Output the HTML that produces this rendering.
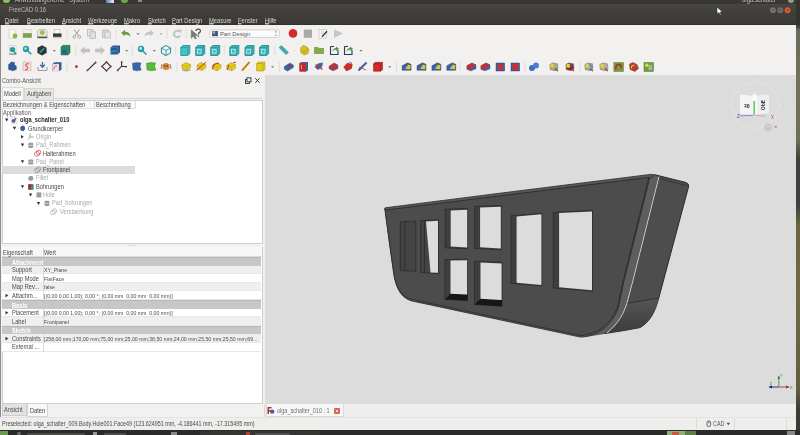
<!DOCTYPE html>
<html><head><meta charset="utf-8">
<style>
*{margin:0;padding:0;box-sizing:border-box}
html,body{width:800px;height:435px;overflow:hidden;background:#3a3935;font-family:"Liberation Sans",sans-serif}
.t,.menu{will-change:transform;transform:scaleY(1.18);transform-origin:0 55%}
.menu u{text-decoration-thickness:0.6px;text-underline-offset:0.1px}
.a{position:absolute}
#top{left:0;top:0;width:800px;height:4px;background:#383733}
#title{left:0;top:4px;width:796px;height:21px;background:linear-gradient(#4a4945 0,#46453f 1px,#403f3b 8px,#3b3a36 19px,#2f2e2b 21px)}
.menu{position:absolute;top:18px;font-size:5.8px;line-height:7px;color:#dcd8cf;white-space:nowrap}
#tb{left:0;top:25px;width:796px;height:50px;background:#f2f1f0}
#left{left:0;top:75px;width:265px;height:355px;background:#f2f1f0}
#view{left:265px;top:75px;width:531px;height:329px;background:#dcdcdc}
#wall{left:795.5px;top:0;width:4.5px;height:435px;background:linear-gradient(#33322e 0,#33322e 25px,#676b5c 30px,#737258 80px,#6f6e55 140px,#3e403c 160px,#3e403c 205px,#6a6540 225px,#6f6a45 300px,#625e3e 390px,#3a3a36 410px,#3a3a36 435px)}
#tabbar{left:264px;top:404px;width:532px;height:13px;background:#efeeec}
#status{left:0;top:417px;width:796px;height:13px;background:#efeeec}
#task{left:0;top:430px;width:800px;height:5px;background:#2b2b2b}
.t{position:absolute;font-size:5.7px;color:#333;white-space:nowrap;line-height:8px}
.grp{left:2px;width:259px;height:8.6px;background:#c8c7c5;border-top:0.6px solid #b9b8b6}
.row{left:2px;width:259px;height:8.6px;background:#fff;border-bottom:0.5px solid #e8e8e8}
.row.alt{background:#efefef}
.gt{left:11.5px;color:#fff;font-weight:bold}
.pl{left:11.5px;color:#4a4a4a}
.pv{left:44px;color:#4a4a4a;font-size:5.2px}
</style></head><body>
<div id="top" class="a"></div>
<div id="title" class="a"></div>
<div class="a t" style="left:9px;top:5.5px;color:#bdb9b0;font-size:5.8px">FreeCAD 0.16</div>
<div class="menu" style="left:5px"><u>D</u>atei</div>
<div class="menu" style="left:27px"><u>B</u>earbeiten</div>
<div class="menu" style="left:62px"><u>A</u>nsicht</div>
<div class="menu" style="left:88px"><u>W</u>erkzeuge</div>
<div class="menu" style="left:124px"><u>M</u>akro</div>
<div class="menu" style="left:148px"><u>S</u>ketch</div>
<div class="menu" style="left:172px"><u>P</u>art Design</div>
<div class="menu" style="left:209px"><u>M</u>easure</div>
<div class="menu" style="left:238px"><u>F</u>enster</div>
<div class="menu" style="left:265px"><u>H</u>ilfe</div>
<div id="tb" class="a"></div>
<svg id="tbsvg" class="a" style="left:0;top:0" width="800" height="80" viewBox="0 0 800 80">
<path d="M9,29.3 H13.5 L15.6,31.4 V38.2 H9 Z" fill="#f6f6f6" stroke="#c8c8c8" stroke-width="0.6"/>
<circle cx="15" cy="36" r="2.4" fill="#8ab83a"/>
<rect x="22.9" y="29.8" width="8.9" height="3.4" fill="#f0f0ee" stroke="#c9c9c9" stroke-width="0.5"/>
<rect x="22.9" y="33.2" width="8.9" height="4.6" fill="#7ea04a"/>
<path d="M37.5,31 L39,29.5 H45.8 L47.2,31 V38 H37.5 Z" fill="#e4e4e2" stroke="#9a9a9a" stroke-width="0.5"/>
<rect x="37.5" y="36.6" width="9.7" height="1.5" fill="#555"/>
<circle cx="42.3" cy="32.6" r="2.4" fill="#9cc040"/>
<rect x="54.5" y="29.8" width="5.5" height="4" fill="#fafafa" stroke="#aaa" stroke-width="0.5"/>
<rect x="53" y="33.5" width="8.5" height="3.5" fill="#3a3a3a"/>
<rect x="53" y="36.8" width="8.5" height="1.4" fill="#c8c8c8"/>
<path d="M67,28.700000000000003 V38.7" stroke="#dcdbd9" stroke-width="0.9"/>
<path d="M74,29.5 L78.5,35.5 M79.5,29.5 L75,35.5" stroke="#a8a8a8" stroke-width="1.1"/>
<circle cx="74.3" cy="36.8" r="1.4" fill="none" stroke="#a0a0a0" stroke-width="0.9"/><circle cx="79.3" cy="36.8" r="1.4" fill="none" stroke="#a0a0a0" stroke-width="0.9"/>
<rect x="87.5" y="29.5" width="5.5" height="6.5" fill="#e8e8e8" stroke="#b0b0b0" stroke-width="0.7"/>
<rect x="90" y="31.8" width="5.5" height="6.5" fill="#e0e0e0" stroke="#b0b0b0" stroke-width="0.7"/>
<rect x="102.5" y="30" width="6" height="7.5" fill="#d8d8d8" stroke="#b8b8b8" stroke-width="0.7"/>
<rect x="105" y="32" width="5.5" height="6" fill="#e6e6e6" stroke="#b8b8b8" stroke-width="0.7"/>
<path d="M116.2,28.700000000000003 V38.7" stroke="#dcdbd9" stroke-width="0.9"/>
<path d="M121,33 L125,29.8 V31.8 Q130,31.8 130.5,36.5 Q128,34.2 125,34.4 V36.2 Z" fill="#6c9a3c"/>
<path d="M136.4,33.2 H139.6 L138,35 Z" fill="#777"/>
<path d="M154,33 L150,29.8 V31.8 Q145,31.8 144.5,36.5 Q147,34.2 150,34.4 V36.2 Z" fill="#c4c4c4"/>
<path d="M159.4,33.2 H162.6 L161,35 Z" fill="#aaa"/>
<path d="M167.2,28.700000000000003 V38.7" stroke="#dcdbd9" stroke-width="0.9"/>
<path d="M179.6,31.6 A3.3,3.3 0 1 0 180.2,35.6" fill="none" stroke="#c4c4c4" stroke-width="2.1"/>
<path d="M177.6,29.8 L181.8,29.6 L181,33.6 Z" fill="#c4c4c4"/>
<path d="M186.4,28.700000000000003 V38.7" stroke="#dcdbd9" stroke-width="0.9"/>
<path d="M191.2,29.8 L191.2,38.3 L193.4,36.3 L195.1,39 L196.5,38.2 L195,35.6 L197.9,35.5 Z" fill="#7c7c7c" stroke="#5a5a5a" stroke-width="0.4"/>
<path d="M195.8,31 Q196.2,29 198.4,29 Q200.6,29.2 200.4,31.2 Q200.2,32.6 198.6,33.2 V34.4" fill="none" stroke="#4a4a4a" stroke-width="1.2"/><circle cx="198.6" cy="36.3" r="0.7" fill="#4a4a4a"/>
<rect x="209.8" y="29.9" width="69.5" height="7.5" rx="1.5" fill="#fbfbfb" stroke="#c4c3c1" stroke-width="0.7"/>
<rect x="212" y="31" width="6" height="5.2" fill="#3a5a9a"/><rect x="212.5" y="31.3" width="2.6" height="2.4" fill="#c0b040"/>
<text x="220" y="35.8" font-family="Liberation Sans" font-size="5.8" fill="#555">Part Design</text>
<path d="M274.8,32.3 H277 L275.9,31 Z M274.8,34.8 H277 L275.9,36.1 Z" fill="#666"/>
<circle cx="293" cy="33.4" r="4.3" fill="#d42a2a"/>
<rect x="303.8" y="29.6" width="8.2" height="8.2" fill="#a9a9a9"/>
<rect x="319" y="29.4" width="7.6" height="8.8" fill="#f4f4f4" stroke="#b8b8b8" stroke-width="0.5"/>
<path d="M321,32 H324 M321,33.5 H323" stroke="#aaa" stroke-width="0.5"/><path d="M322,36.8 L327,31.3" stroke="#333" stroke-width="1.3"/>
<path d="M334,29.3 L343,33.6 L334,38 Z" fill="#c6c6c6"/>
<rect x="9.2" y="45.8" width="6.8" height="9" fill="#f3f3f3" stroke="#bbb" stroke-width="0.5"/>
<circle cx="12.5" cy="49.5" r="2.6" fill="#1e9ea0"/><path d="M13.5,51 L16,54" stroke="#1e9ea0" stroke-width="1.5"/>
<path d="M9.5,54 H15.5" stroke="#555" stroke-width="0.8"/>
<circle cx="26" cy="49" r="3.2" fill="#28a0a6"/><circle cx="25.6" cy="48.4" r="1.2" fill="#b8eef0"/><path d="M27.8,51 L31.2,54.2" stroke="#28a0a6" stroke-width="1.7"/>
<path d="M42,45.3 L46.6,47.8 V53 L42,55.5 L37.4,53 V47.8 Z" fill="#2c3838"/><path d="M39.8,52.5 L44.2,48.2" stroke="#30b0b8" stroke-width="1.2"/>
<path d="M52.699999999999996,50.0 H55.9 L54.3,51.8 Z" fill="#777"/>
<path d="M61,47 L63,45.3 H70 V53 L68,55 H61 Z" fill="#2a8a5a" stroke="#1a6a4a" stroke-width="0.5"/>
<circle cx="64.5" cy="52" r="2.3" fill="#2a5aa0"/>
<path d="M75.6,45.5 V55.5" stroke="#dcdbd9" stroke-width="0.9"/>
<path d="M80,50.5 L84.5,46.5 V48.8 H90 V52.2 H84.5 V54.5 Z" fill="#c2c2c2"/>
<path d="M105,50.5 L100.5,46.5 V48.8 H95 V52.2 H100.5 V54.5 Z" fill="#c2c2c2"/>
<path d="M110.5,47.5 L113,45.5 H120 V52.5 L117.5,54.5 H110.5 Z" fill="#2a5a98"/><path d="M110.5,47.5 H117.5 V54.5" stroke="#5a8ac8" stroke-width="0.5" fill="none"/>
<path d="M110,54 Q112,50 116,51" stroke="#30b8c0" stroke-width="1" fill="none"/>
<path d="M125.10000000000001,50.0 H128.3 L126.7,51.8 Z" fill="#777"/>
<path d="M132.4,45.5 V55.5" stroke="#dcdbd9" stroke-width="0.9"/>
<circle cx="141" cy="49" r="3.2" fill="#28a0a6"/><circle cx="140.6" cy="48.4" r="1.3" fill="#c8f0f0"/><path d="M142.8,51 L146.5,54.5" stroke="#28a0a6" stroke-width="1.7"/>
<path d="M152.70000000000002,50.0 H155.9 L154.3,51.8 Z" fill="#777"/>
<path d="M166,45.5 L170.6,48 V53 L166,55.5 L161.4,53 V48 Z" fill="#e8f4f4" stroke="#2a8a8e" stroke-width="1"/><path d="M161.4,48 L166,50.5 L170.6,48 M166,50.5 V55.5" stroke="#2a8a8e" stroke-width="0.8" fill="none"/>
<path d="M175.7,45.5 V55.5" stroke="#dcdbd9" stroke-width="0.9"/>
<path d="M180.8,47.5 L182.8,45.5 L189.8,45.5 L189.8,53.5 L187.8,55.5 L180.8,55.5 Z" fill="#3cc6cc" stroke="#2a8e92" stroke-width="0.9"/>
<path d="M187.8,47.5 L189.8,45.5 M187.8,47.5 V55.5 M180.8,47.5 H187.8" stroke="#2a8e92" stroke-width="0.7" fill="none"/>
<path d="M195.7,47.5 L197.7,45.5 L204.7,45.5 L204.7,53.5 L202.7,55.5 L195.7,55.5 Z" fill="#3ab8be" stroke="#2a8e92" stroke-width="0.9"/>
<path d="M202.7,47.5 L204.7,45.5 M202.7,47.5 V55.5 M195.7,47.5 H202.7" stroke="#2a8e92" stroke-width="0.7" fill="none"/>
<rect x="197.5" y="49.5" width="3.6" height="3.6" fill="none" stroke="#e0f4f4" stroke-width="0.7"/>
<path d="M210.7,47.5 L212.7,45.5 L219.7,45.5 L219.7,53.5 L217.7,55.5 L210.7,55.5 Z" fill="#3ab8be" stroke="#2a8e92" stroke-width="0.9"/>
<path d="M217.7,47.5 L219.7,45.5 M217.7,47.5 V55.5 M210.7,47.5 H217.7" stroke="#2a8e92" stroke-width="0.7" fill="none"/>
<rect x="212.5" y="49.5" width="3.6" height="3.6" fill="none" stroke="#e0f4f4" stroke-width="0.7"/>
<path d="M224.2,45.5 V55.5" stroke="#dcdbd9" stroke-width="0.9"/>
<path d="M229.8,47.5 L231.8,45.5 L238.8,45.5 L238.8,53.5 L236.8,55.5 L229.8,55.5 Z" fill="#3ab8be" stroke="#2a8e92" stroke-width="0.9"/>
<path d="M236.8,47.5 L238.8,45.5 M236.8,47.5 V55.5 M229.8,47.5 H236.8" stroke="#2a8e92" stroke-width="0.7" fill="none"/>
<rect x="231.60000000000002" y="49.5" width="3.6" height="3.6" fill="none" stroke="#e0f4f4" stroke-width="0.7"/>
<path d="M245.0,47.5 L247.0,45.5 L254.0,45.5 L254.0,53.5 L252.0,55.5 L245.0,55.5 Z" fill="#3ab8be" stroke="#2a8e92" stroke-width="0.9"/>
<path d="M252.0,47.5 L254.0,45.5 M252.0,47.5 V55.5 M245.0,47.5 H252.0" stroke="#2a8e92" stroke-width="0.7" fill="none"/>
<rect x="246.8" y="49.5" width="3.6" height="3.6" fill="none" stroke="#e0f4f4" stroke-width="0.7"/>
<path d="M259.6,47.5 L261.6,45.5 L268.6,45.5 L268.6,53.5 L266.6,55.5 L259.6,55.5 Z" fill="#3ab8be" stroke="#2a8e92" stroke-width="0.9"/>
<path d="M266.6,47.5 L268.6,45.5 M266.6,47.5 V55.5 M259.6,47.5 H266.6" stroke="#2a8e92" stroke-width="0.7" fill="none"/>
<rect x="261.40000000000003" y="49.5" width="3.6" height="3.6" fill="none" stroke="#e0f4f4" stroke-width="0.7"/>
<path d="M274.8,45.5 V55.5" stroke="#dcdbd9" stroke-width="0.9"/>
<path d="M279,47.5 L281.5,45.5 L288.5,52.5 L286,54.5 Z" fill="#36b0b8" stroke="#2a8e92" stroke-width="0.5"/>
<circle cx="295" cy="50.6" r="0.6" fill="#ddd"/>
<path d="M300.5,48 L303,45.5 L306.5,46.5 L309,49.5 L308,53.5 L304.5,55 L301,53 Z" fill="#d8c024" stroke="#9a8a10" stroke-width="0.5"/>
<path d="M302.5,50.5 L304.5,52.5 L307.5,48.5" stroke="#8a7a10" stroke-width="0.6" fill="none"/>
<path d="M314,47 H318 L319,48 H324 V54 H314 Z" fill="#86a850"/>
<path d="M330.5,46.5 H334 M330.5,46.5 V54.5 H338 V50" stroke="#2a3a5a" stroke-width="1.1" fill="none"/><path d="M332.5,51.5 Q333,48 336,48 V46.5 L339,48.8 L336,51 V49.6 Q334,49.6 332.5,51.5 Z" fill="#4a9a3a"/>
<path d="M344.5,46.5 H348 M344.5,46.5 V54.5 H352 V50" stroke="#2a3a5a" stroke-width="1.1" fill="none"/><path d="M346.5,51.5 Q347,48 350,48 V46.5 L353,48.8 L350,51 V49.6 Q348,49.6 346.5,51.5 Z" fill="#4a9a3a"/>
<path d="M359.4,50.0 H362.6 L361,51.8 Z" fill="#777"/>
<path d="M8.6,64.5 L11.5,62 L14.5,62.5 L14.5,65 L16.3,66 V69.5 L13,70.8 L8.6,69.5 Z" fill="#2e5c9c" stroke="#1e3c6c" stroke-width="0.4"/>
<rect x="23" y="62" width="8" height="8.8" fill="#f2dcdc" stroke="#c8a0a0" stroke-width="0.5"/><path d="M29,63.8 Q24.5,63.5 26,66.2 Q29.5,67 27,69.6 L25,69.8" stroke="#d03030" stroke-width="0.9" fill="none"/>
<path d="M38,67 V70.5 H47 V67" stroke="#9a9a9a" stroke-width="1" fill="#f0f0f0"/><path d="M42.5,62 V66.5 M40.2,64.8 L42.5,67.3 L44.8,64.8" stroke="#3a6aa8" stroke-width="1.3" fill="none"/>
<path d="M52.5,64 L54.5,62.3 H61.5 V69.5 L59.5,71 H52.5 Z" fill="#2e5a98"/><rect x="52.5" y="64" width="6.5" height="7" fill="#f0e6e6" stroke="#aaa" stroke-width="0.3"/><path d="M54,69.5 Q53.8,65.5 57,66" stroke="#d03030" stroke-width="0.8" fill="none"/>
<path d="M66.9,61.8 V71.8" stroke="#dcdbd9" stroke-width="0.9"/>
<circle cx="76.4" cy="66.6" r="1.3" fill="#9a2030"/>
<path d="M87.4,70.4 L95.6,62.5" stroke="#2a3050" stroke-width="1.1"/><circle cx="87.4" cy="70.4" r="0.9" fill="#b02030"/><circle cx="95.6" cy="62.5" r="0.9" fill="#b02030"/>
<path d="M106.4,62 L110.8,66.4 L106.4,70.8 L102,66.4 Z" fill="none" stroke="#2a3050" stroke-width="1.1"/><g fill="#b02030"><circle cx="106.4" cy="62" r="0.9"/><circle cx="110.8" cy="66.4" r="0.9"/><circle cx="106.4" cy="70.8" r="0.9"/><circle cx="102" cy="66.4" r="0.9"/></g>
<path d="M117.6,70.4 L121.6,66.2 L126.2,66.6 M121.6,66.2 V62" stroke="#2a3050" stroke-width="1.1" fill="none"/><g fill="#b02030"><circle cx="117.6" cy="70.4" r="0.9"/><circle cx="126.2" cy="66.6" r="0.9"/><circle cx="121.6" cy="62" r="0.9"/></g>
<path d="M132.5,63.3 L137,62.5 L141,63 L140,66.5 L141.2,70 L136.5,70.8 L133,70 Z" fill="#3a66a8" stroke="#1e3c6c" stroke-width="0.4"/>
<path d="M146.5,63.3 L151,62.5 L155.5,63 L154.5,66.5 L156,70 L151,70.8 L147,70 Z" fill="#52c030" stroke="#2a6a20" stroke-width="0.4"/>
<circle cx="166" cy="66.5" r="3.6" fill="#d8843c"/><circle cx="164.8" cy="66" r="0.7" fill="#333"/><circle cx="167.2" cy="66" r="0.7" fill="#333"/><path d="M162,64 L161,69 M170,64 L171,69" stroke="#8a5020" stroke-width="0.7"/>
<path d="M177,61.8 V71.8" stroke="#dcdbd9" stroke-width="0.9"/>
<path d="M181.89999999999998,65.0 L185.7,62.5 L190.5,64.5 L190.5,68.0 L186.7,70.5 L181.89999999999998,68.5 Z" fill="#e4cc1c" stroke="#a08a10" stroke-width="0.5"/>
<path d="M181.89999999999998,65.0 L186.7,67.0 L190.5,64.5 M186.7,67.0 V70.5" stroke="#b09a10" stroke-width="0.4" fill="none"/>
<path d="M182,70 Q186,72 190.5,70" stroke="#888" stroke-width="0.8" fill="none"/>
<path d="M197.1,65.0 L200.9,62.5 L205.70000000000002,64.5 L205.70000000000002,68.0 L201.9,70.5 L197.1,68.5 Z" fill="#e4cc1c" stroke="#a08a10" stroke-width="0.5"/>
<path d="M197.1,65.0 L201.9,67.0 L205.70000000000002,64.5 M201.9,67.0 V70.5" stroke="#b09a10" stroke-width="0.4" fill="none"/>
<path d="M196.5,70.5 L206,62" stroke="#c83020" stroke-width="1" fill="none"/>
<path d="M212.29999999999998,65.3 L216.1,62.8 L220.9,64.8 L220.9,68.3 L217.1,70.8 L212.29999999999998,68.8 Z" fill="#e4cc1c" stroke="#a08a10" stroke-width="0.5"/>
<path d="M212.29999999999998,65.3 L217.1,67.3 L220.9,64.8 M217.1,67.3 V70.8" stroke="#b09a10" stroke-width="0.4" fill="none"/>
<path d="M212.5,69 L214,64.5 L219,63" stroke="#c83020" stroke-width="1" fill="none"/>
<path d="M226.89999999999998,65.3 L230.7,62.8 L235.5,64.8 L235.5,68.3 L231.7,70.8 L226.89999999999998,68.8 Z" fill="#e4cc1c" stroke="#a08a10" stroke-width="0.5"/>
<path d="M226.89999999999998,65.3 L231.7,67.3 L235.5,64.8 M231.7,67.3 V70.8" stroke="#b09a10" stroke-width="0.4" fill="none"/>
<path d="M227,70 L229,65 M233,63 L236,62" stroke="#c83020" stroke-width="1" fill="none"/>
<path d="M242,70.5 L246,66 L249.5,62" stroke="#d8a020" stroke-width="2"/><path d="M242,70.5 L249.5,62" stroke="#c83020" stroke-width="0.7"/>
<path d="M256.6,63.5 L258.5,62 H265 V69.5 L263,71 H256.6 Z" fill="#e4cc1c" stroke="#a08a10" stroke-width="0.5"/><path d="M256.6,63.5 H263 V71" stroke="#a08a10" stroke-width="0.5" fill="none"/>
<path d="M271.0,66.2 H274.20000000000005 L272.6,68 Z" fill="#777"/>
<path d="M279.5,61.8 V71.8" stroke="#dcdbd9" stroke-width="0.9"/>
<path d="M284.3,66.5 L290,63 L293.3,65 V67.5 L287.5,71 L284.3,69.3 Z" fill="#3a64a8" stroke="#1e3c6c" stroke-width="0.4"/><path d="M287,66.3 L290,64.6 L291.6,65.6 L288.6,67.3 Z" fill="#b03030"/>
<path d="M299.5,63 L301.5,62 H308 V70.5 L306,71.5 H299.5 Z" fill="#3a64a8"/><rect x="299.5" y="63" width="6.5" height="8.5" fill="#c42a2a"/><path d="M301.5,65 V69" stroke="#fff" stroke-width="0.5"/>
<path d="M314.5,67 L318,63.5 L323,62.5 L322,67 L318,70 Z" fill="#3a64a8"/><path d="M315.5,64.5 L322.5,69.5" stroke="#d03030" stroke-width="1.2"/>
<path d="M329.2,66.3 L334.0,63.0 L337.8,65.0 L337.8,68.6 L333.0,70.8 L329.2,68.8 Z" fill="#d42a2a" stroke="#5a1010" stroke-width="0.4"/>
<path d="M329.2,67.0 L333.0,68.8 L337.8,65.3" stroke="#3a64a8" stroke-width="1.2" fill="none"/>
<path d="M343.7,67 L347.5,63 L352.3,64.5 L351.5,68.5 L346.5,71 Z" fill="#d42a2a" stroke="#5a1010" stroke-width="0.4"/><path d="M349.5,62 L352,63.5" stroke="#3a64a8" stroke-width="1"/>
<path d="M358.5,70.5 L363,66 L366.5,62.5" stroke="#3a64a8" stroke-width="2.2"/><path d="M359,67 L366,70" stroke="#d03030" stroke-width="0.8"/>
<path d="M373.5,63.8 L375.5,62.3 H382.5 V69.8 L380.5,71.2 H373.5 Z" fill="#d42a2a" stroke="#7a1010" stroke-width="0.5"/><path d="M373.5,63.8 H380.5 V71.2" stroke="#8a1818" stroke-width="0.5" fill="none"/>
<path d="M388.2,66.2 H391.40000000000003 L389.8,68 Z" fill="#777"/>
<path d="M396.5,61.8 V71.8" stroke="#dcdbd9" stroke-width="0.9"/>
<path d="M402.1,65.8 L407.6,62.8 L411.1,64.3 L411.1,70.3 L402.1,70.3 Z" fill="#3a64a8" stroke="#1e3c6c" stroke-width="0.4"/>
<path d="M405.1,68.8 L408.1,64.8 L410.6,65.3 L410.1,69.3 Z" fill="#e0c820"/>
<path d="M417.0,65.8 L422.5,62.8 L426.0,64.3 L426.0,70.3 L417.0,70.3 Z" fill="#3a64a8" stroke="#1e3c6c" stroke-width="0.4"/>
<path d="M420.0,68.8 L423.0,64.8 L425.5,65.3 L425.0,69.3 Z" fill="#e0c820"/>
<path d="M431.9,65.8 L437.4,62.8 L440.9,64.3 L440.9,70.3 L431.9,70.3 Z" fill="#3a64a8" stroke="#1e3c6c" stroke-width="0.4"/>
<path d="M434.9,68.8 L437.9,64.8 L440.4,65.3 L439.9,69.3 Z" fill="#e0c820"/>
<path d="M446.8,65.8 L452.3,62.8 L455.8,64.3 L455.8,70.3 L446.8,70.3 Z" fill="#3a64a8" stroke="#1e3c6c" stroke-width="0.4"/>
<path d="M449.8,68.8 L452.8,64.8 L455.3,65.3 L454.8,69.3 Z" fill="#e0c820"/>
<path d="M460,61.8 V71.8" stroke="#dcdbd9" stroke-width="0.9"/>
<path d="M466.9,65.8 L471.9,63.0 L475.9,64.8 V68.8 L470.9,70.8 L466.9,69.3 Z" fill="#3a64a8" stroke="#1e2c5c" stroke-width="0.4"/>
<path d="M466.9,65.8 L471.9,63.0 L475.9,64.8 L470.9,67.8 Z" fill="#d42a2a"/>
<path d="M466.9,65.8 L470.9,67.8 V70.3 L466.9,68.8 Z" fill="#d42a2a"/>
<path d="M480.9,65.8 L485.9,63.0 L489.9,64.8 V68.8 L484.9,70.8 L480.9,69.3 Z" fill="#3a64a8" stroke="#1e2c5c" stroke-width="0.4"/>
<path d="M480.9,65.8 L485.9,63.0 L489.9,64.8 L484.9,67.8 Z" fill="#d42a2a"/>
<path d="M480.9,65.8 L484.9,67.8 V70.3 L480.9,68.8 Z" fill="#d42a2a"/>
<rect x="496" y="63" width="8.6" height="8" fill="#3a64a8" stroke="#1e2c5c" stroke-width="0.4"/><rect x="497.5" y="64.5" width="5.6" height="5" fill="#d42a2a"/>
<rect x="511" y="63" width="8.6" height="8" fill="#3a64a8" stroke="#1e2c5c" stroke-width="0.4"/><path d="M512.5,64 L517.5,63.5 L518.5,70 L513,70.5 Z" fill="#d42a2a"/>
<path d="M525,61.8 V71.8" stroke="#dcdbd9" stroke-width="0.9"/>
<circle cx="532" cy="68" r="3" fill="#3a70c0"/><circle cx="536" cy="65.5" r="3" fill="#4a80d0"/>
<circle cx="546" cy="67" r="0.6" fill="#ddd"/>
<path d="M549.8,64.5 L552.5,63 L557.5,63.8 L558,69 L555,70.8 L550.2,69.5 Z" fill="#a8a890" stroke="#555" stroke-width="0.4"/>
<circle cx="552.2" cy="65.8" r="2.1" fill="#e0d030"/>
<path d="M555,68.5 L558,71.2" stroke="#505030" stroke-width="1.1"/>
<path d="M565.8,64.5 L568.5,63 L573.5,63.8 L574,69 L571,70.8 L566.2,69.5 Z" fill="#8a2a2a" stroke="#555" stroke-width="0.4"/>
<circle cx="568.2" cy="65.8" r="2.1" fill="#e0d030"/>
<path d="M571,68.5 L574,71.2" stroke="#c02020" stroke-width="1.1"/>
<path d="M570.5,64 L573.5,67.5" stroke="#3a5a9a" stroke-width="1.2"/>
<path d="M580,61.8 V71.8" stroke="#dcdbd9" stroke-width="0.9"/>
<path d="M584.8,64.5 L587.5,63 L592.5,63.8 L593,69 L590,70.8 L585.2,69.5 Z" fill="#a0a8b0" stroke="#555" stroke-width="0.4"/>
<circle cx="587.2" cy="65.8" r="2.1" fill="#e0d030"/>
<path d="M590,68.5 L593,71.2" stroke="#506070" stroke-width="1.1"/>
<path d="M589.5,64 L592.5,67.5" stroke="#5a80b8" stroke-width="1.2"/>
<path d="M599.8,64.5 L602.5,63 L607.5,63.8 L608,69 L605,70.8 L600.2,69.5 Z" fill="#b0b0a0" stroke="#555" stroke-width="0.4"/>
<circle cx="602.2" cy="65.8" r="2.1" fill="#e0d030"/>
<path d="M605,68.5 L608,71.2" stroke="#c02020" stroke-width="1.1"/>
<path d="M613.8,62.5 H623.5 V71.5 H613.8 Z" fill="#7a9a40" stroke="#4a6a20" stroke-width="0.4"/><path d="M616,69.5 Q615,64 619.5,64.5 Q622,65.5 621,68.5" stroke="#a83020" stroke-width="1.4" fill="none"/>
<path d="M629.5,64 L633,62.5 L637,64.5 L638.5,68.5 L635,71.5 L630,69.5 Z" fill="#b84030" stroke="#6a2010" stroke-width="0.4"/><path d="M631.5,68.5 Q631,65 634.5,65.2" stroke="#e0c040" stroke-width="1.1" fill="none"/>
<rect x="644" y="62.5" width="9.5" height="9" fill="#6aa040" stroke="#406020" stroke-width="0.4"/><circle cx="646.8" cy="65.3" r="1.8" fill="#e8d840"/><rect x="648.5" y="65" width="3.5" height="5" fill="#a8b8a0"/>
</svg>

<div id="left" class="a"></div>
<!-- LEFT PANEL -->
<div class="a" style="left:0;top:25px;width:1.2px;height:405px;background:#8c8c8c"></div>
<div class="t" style="left:2px;top:77px;color:#5a5a5a">Combo-Ansicht</div>
<div class="a" style="left:54px;top:98.3px;width:208px;height:0.8px;background:#d6d5d3"></div>
<svg class="a" style="left:243.3px;top:76px" width="20" height="10" viewBox="0 0 20 10"><rect x="2.5" y="3.5" width="4" height="4" fill="none" stroke="#333" stroke-width="0.9"/><rect x="4" y="1.8" width="4" height="4" fill="#f2f1f0" stroke="#333" stroke-width="0.9"/><path d="M12.3,2.3 L16.5,6.8 M16.5,2.3 L12.3,6.8" stroke="#3a3a3a" stroke-width="1"/></svg>
<!-- tabs -->
<div class="a" style="left:1.5px;top:87px;width:22.5px;height:13px;background:#f6f6f5;border:0.8px solid #dcdbd9;border-bottom:none;border-radius:1px 1px 0 0"></div>
<div class="a" style="left:24px;top:88px;width:30px;height:12px;background:#e6e5e3;border:0.8px solid #d6d5d3;border-bottom:none"></div>
<div class="t" style="left:4px;top:90px;color:#484848">Modell</div>
<div class="t" style="left:27px;top:90px;color:#505050">Aufgaben</div>
<!-- tree box -->
<div class="a" style="left:1.5px;top:100px;width:261px;height:144px;background:#fff;border:1px solid #cfcecc"></div>
<div class="a" style="left:2px;top:100.5px;width:134px;height:8px;background:#f8f8f8;border-bottom:0.8px solid #e0dfdd"></div>
<div class="a" style="left:94px;top:101px;width:0.7px;height:7px;background:#dddcda"></div>
<div class="a" style="left:135px;top:101px;width:0.7px;height:7px;background:#dddcda"></div>
<div class="t" style="left:3px;top:100.5px;color:#484848">Bezeichnungen &amp; Eigenschaften</div>
<div class="t" style="left:96px;top:100.5px;color:#484848">Beschreibung</div>
<div class="a" style="left:2px;top:166px;width:133px;height:8.3px;background:#dcdcdc"></div>
<div id="tree">
<div class="t" style="left:3px;top:109px;color:#5a5a5a">Applikation</div>
<div class="t" style="left:19.8px;top:116.4px;color:#2a2a2a;font-weight:bold">olga_schalter_010</div>
<div class="t" style="left:27.6px;top:124.5px;color:#484848">Grundkoerper</div>
<div class="t" style="left:35.8px;top:132.8px;color:#aaa">Origin</div>
<div class="t" style="left:35.8px;top:141.2px;color:#aaa">Pad_Rahmen</div>
<div class="t" style="left:43.2px;top:149.5px;color:#484848">Halterahmen</div>
<div class="t" style="left:35.8px;top:157.9px;color:#aaa">Pad_Panel</div>
<div class="t" style="left:43.2px;top:166.1px;color:#484848">Frontpanel</div>
<div class="t" style="left:35.8px;top:174.4px;color:#aaa">Fillet</div>
<div class="t" style="left:35.8px;top:182.8px;color:#484848">Bohrungen</div>
<div class="t" style="left:43.2px;top:191px;color:#aaa">Hole</div>
<div class="t" style="left:51.5px;top:199.4px;color:#aaa">Pad_bohrungen</div>
<div class="t" style="left:59.6px;top:207.8px;color:#aaa">Verstaerkung</div>
</div>
<svg class="a" style="left:0;top:108px" width="70" height="110" viewBox="0 108 70 110">
<g fill="#333">
<path d="M5,118.5 L8.4,118.5 L6.7,121.5 Z"/>
<path d="M12.8,126.8 L16.2,126.8 L14.5,129.8 Z"/>
<path d="M21,135 L21,138.6 L23.8,136.8 Z"/>
<path d="M20.8,143.6 L24.2,143.6 L22.5,146.6 Z"/>
<path d="M20.8,160.3 L24.2,160.3 L22.5,163.3 Z"/>
<path d="M20.8,185.3 L24.2,185.3 L22.5,188.3 Z"/>
<path d="M28.8,193.5 L32.2,193.5 L30.5,196.5 Z"/>
<path d="M36.8,201.9 L40.2,201.9 L38.5,204.9 Z"/>
</g>
<!-- olga icon -->
<path d="M11.3,116.3 H15.3 L17,118 V123.8 H11.3 Z" fill="#f4f4f6" stroke="#b8b8c8" stroke-width="0.4"/><circle cx="13.6" cy="120.8" r="1.9" fill="#3a5ea8"/><path d="M14.3,117.3 L16.4,118.6 L15.2,120.6 Z" fill="#c8303a"/>
<!-- grundkoerper -->
<path d="M20,127.4 L22.2,125.5 L24.6,126.2 L25.2,129 L23.4,131.3 L20.6,130.6 Z" fill="#3e62a6"/><path d="M21.5,127.5 L23.5,127 L23.8,129" stroke="#2a4a8a" stroke-width="0.5" fill="none"/>
<!-- origin -->
<path d="M27.8,139.5 L30,137 L30,133.3 M30,137 L33.8,137" stroke="#8a8a8a" stroke-width="0.8" fill="none"/>
<!-- pad icons -->
<g fill="#9a9a9a"><rect x="28.3" y="142.8" width="5" height="5.2" rx="1.2"/><rect x="28.3" y="159.4" width="5" height="5.2" rx="1.2"/><rect x="28.3" y="176" width="5" height="4.8" rx="2"/><rect x="44.5" y="200.8" width="5" height="5.2" rx="1.2"/><rect x="36.5" y="192.4" width="4.8" height="5" /></g>
<g stroke="#fff" stroke-width="0.5"><path d="M28.3,145.4 H33.3 M28.3,162 H33.3 M44.5,203.4 H49.5"/></g>
<!-- halterahmen sketch red -->
<rect x="34.8" y="151.8" width="4.6" height="4.2" rx="1.3" fill="none" stroke="#d83a3a" stroke-width="0.65" transform="rotate(-20 37 154)"/><rect x="36.6" y="150.4" width="4.2" height="4" rx="1.3" fill="none" stroke="#d83a3a" stroke-width="0.65" transform="rotate(-20 38.7 152.4)"/>
<!-- frontpanel -->
<rect x="34.8" y="168.4" width="4.6" height="4.2" rx="1.3" fill="none" stroke="#8a8a8a" stroke-width="0.6" transform="rotate(-20 37 170.5)"/><rect x="36.6" y="167" width="4.2" height="4" rx="1.3" fill="none" stroke="#8a8a8a" stroke-width="0.6" transform="rotate(-20 38.7 169)"/>
<!-- bohrungen -->
<rect x="28.4" y="184.3" width="5" height="5.3" fill="#3a55a0"/><rect x="28.4" y="184.3" width="2.5" height="5.3" fill="#b02828"/><rect x="30.9" y="186" width="2.5" height="3.6" fill="#40a040"/>
<!-- verstaerkung -->
<rect x="50.6" y="210.4" width="4.6" height="4.2" rx="1.3" fill="none" stroke="#aaa" stroke-width="0.6" transform="rotate(-20 52.8 212.5)"/><rect x="52.4" y="209" width="4.2" height="4" rx="1.3" fill="none" stroke="#aaa" stroke-width="0.6" transform="rotate(-20 54.5 211)"/>
</svg>
<!-- splitter -->
<div class="a" style="left:128px;top:244.5px;width:8px;height:1px;background:#e0dfdd"></div>
<!-- props box -->
<div class="a" style="left:1.5px;top:246.5px;width:261px;height:157.5px;background:#fff;border:1px solid #cfcecc"></div>
<div class="a" style="left:2px;top:247px;width:260px;height:10px;background:#f7f7f7;border-bottom:1px solid #dedddb"></div>
<div class="a" style="left:42.5px;top:248px;width:1px;height:9px;background:#d0cfcd"></div>
<div class="t" style="left:3px;top:248.5px;color:#484848">Eigenschaft</div>
<div class="t" style="left:44px;top:248.5px;color:#484848">Wert</div>
<div id="props">
<div class="a grp" style="top:257px"></div>
<div class="a row alt" style="top:265.6px"></div>
<div class="a row" style="top:274.2px"></div>
<div class="a row alt" style="top:282.8px"></div>
<div class="a row" style="top:291.4px"></div>
<div class="a grp" style="top:300px"></div>
<div class="a row" style="top:308.6px"></div>
<div class="a row alt" style="top:317.2px"></div>
<div class="a grp" style="top:325.8px"></div>
<div class="a row alt" style="top:334.4px"></div>
<div class="a row" style="top:343px"></div>
<div class="a" style="left:42.5px;top:265.6px;width:0.8px;height:34.4px;background:#d8d8d8"></div>
<div class="a" style="left:42.5px;top:308.6px;width:0.8px;height:17.2px;background:#d8d8d8"></div>
<div class="a" style="left:42.5px;top:334.4px;width:0.8px;height:17.2px;background:#d8d8d8"></div>
<div class="t gt" style="top:258.5px">Attachment</div>
<div class="t pl" style="top:265.9px">Support</div><div class="t pv" style="top:265.9px">XY_Plane</div>
<div class="t pl" style="top:274.5px">Map Mode</div><div class="t pv" style="top:274.5px">FlatFace</div>
<div class="t pl" style="top:283.1px">Map Rev...</div><div class="t pv" style="top:283.1px">false</div>
<div class="t pl" style="top:291.7px">Attachm...</div><div class="t pv" style="top:291.7px">[(0,00 0,00 1,00); 0,00 °; (0,00 mm&nbsp; 0,00 mm&nbsp; 0,00 mm)]</div>
<div class="t gt" style="top:301.5px">Basis</div>
<div class="t pl" style="top:308.9px">Placement</div><div class="t pv" style="top:308.9px">[(0,00 0,00 1,00); 0,00 °; (0,00 mm&nbsp; 0,00 mm&nbsp; 0,00 mm)]</div>
<div class="t pl" style="top:317.5px">Label</div><div class="t pv" style="top:317.5px">Frontpanel</div>
<div class="t gt" style="top:327.3px">Sketch</div>
<div class="t pl" style="top:334.7px">Constraints</div><div class="t pv" style="top:334.7px">[258,00 mm;170,00 mm;75,00 mm;25,00 mm;38,50 mm;24,00 mm;25,50 mm;25,50 mm;69...</div>
<div class="t pl" style="top:343.3px">External ...</div>
</div>
<svg class="a" style="left:0;top:290px" width="12" height="60" viewBox="0 290 12 60"><g fill="#333"><path d="M5.5,293.8 L5.5,297.4 L8.3,295.6 Z"/><path d="M5.5,311 L5.5,314.6 L8.3,312.8 Z"/><path d="M5.5,336.8 L5.5,340.4 L8.3,338.6 Z"/></g></svg>
<!-- bottom tabs -->
<div class="a" style="left:2px;top:403.5px;width:25px;height:12px;background:#e3e2e0;border:1px solid #cfcecc;border-top:none"></div>
<div class="a" style="left:27px;top:403.5px;width:20.5px;height:13.5px;background:#f8f8f8;border:1px solid #d6d5d3;border-top:none"></div>
<div class="t" style="left:4px;top:406px;color:#505050">Ansicht</div>
<div class="t" style="left:29.5px;top:407px;color:#484848">Daten</div>
<div id="view" class="a"></div>
<div id="wall" class="a"></div>
<svg class="a" style="left:0;top:0" width="800" height="435" viewBox="0 0 800 435">
<defs>
<linearGradient id="sb" x1="0" y1="0" x2="0" y2="1"><stop offset="0" stop-color="#565656"/><stop offset="1" stop-color="#3c3c3c"/></linearGradient>
</defs>
<!-- side face -->
<path d="M655,174.8 L686,182.5 Q689.5,184 688.5,187 L658.8,298 C655,312 650,322 640,327.6 L625.5,330.3 L605,333.5 L600,320 Z" fill="#4d4d4d" stroke="#2a2a2a" stroke-width="1"/>
<path d="M659.2,178.4 L686.5,185.6" stroke="#2c2c2c" stroke-width="0.7" fill="none"/>
<path d="M618,304.8 L658.8,298 C655,312 650,322 640,327.6 L625.5,330.3 L606.9,333.1 C614,326 617,318 618,304.8 Z" fill="url(#sb)"/>
<path d="M618,304.8 L658.8,298" stroke="#2a2a2a" stroke-width="0.8" fill="none"/>
<!-- fillet strip -->
<path d="M648.5,176 L655,174.6 L659,176.6 L633.1,280 L626.9,303.4 C624,312 620,322 606.9,333.1 L586,336.5 L593.8,332.4 C605,328 614,318 618,305.5 L623.4,280 Z" fill="#5e5e5e" stroke="#2a2a2a" stroke-width="0.6"/>
<path d="M659,176.6 L633.1,280 L626.9,303.4 C624,312 620,322 606.9,333.1" stroke="#f4f4f4" stroke-width="0.8" fill="none"/>
<!-- top band -->
<path d="M384.5,208.9 Q384.5,207.7 386,207.7 L500,193.2 L650.5,174.4 Q653,174.2 654,175.5 L651,178 L500,196.9 L385.5,211.3 Z" fill="#5a5a5a" stroke="#262626" stroke-width="0.8"/>
<!-- front face -->
<path transform="translate(0.4,1.6)" d="M385,210.1 L500,195.8 L649,177.4 L623.4,280 L618,305.5 C614,318 605,328 593.8,332.4 C588,334.5 584,335.5 580,335.5 L411.2,299.3 C401,296.5 395.5,287 393.5,272 L389,240 Z" fill="#5a5a5a" stroke="#262626" stroke-width="0.8"/>
<path d="M385,210.1 L500,195.8 L649,177.4 L623.4,280 L618,305.5 C614,318 605,328 593.8,332.4 C588,334.5 584,335.5 580,335.5 L411.2,299.3 C401,296.5 395.5,287 393.5,272 L389,240 Z" fill="#4c4c4c" stroke="#262626" stroke-width="0.8"/>
<!-- holes -->
<g stroke="#262626" stroke-width="0.7">
<path d="M400.3,222 L415.8,221 L415.8,271.3 L400.3,270.5 Z" fill="#444"/>
<path d="M404.8,221.8 L404.8,270.8" fill="none"/>
<path d="M420.8,220.6 L438.5,219.8 L438.5,273.5 L420.8,272.5 Z" fill="#444"/>
<path d="M424.5,220.5 L424.5,272.6" fill="none"/>
<path d="M445.1,209.3 L467.6,208.4 L467.6,248.7 L445.1,247.8 Z" fill="#3e3e3e"/>
<path d="M474.6,206.4 L501.2,205.5 L501.2,249.8 L474.6,248.5 Z" fill="#3e3e3e"/>
<path d="M445,259.5 L467.5,259.2 L467.5,300.5 L445,299.5 Z" fill="#3e3e3e"/>
<path d="M474.5,261.2 L502,262.3 L502,306.3 L474.5,304.5 Z" fill="#3e3e3e"/>
<path d="M450.5,293.8 L467.5,294.5 L467.5,300.5 L445,299.5 Z" fill="#161616" stroke="none"/>
<path d="M480.5,298.8 L502,300 L502,306.3 L474.5,304.5 Z" fill="#161616" stroke="none"/>
<path d="M511,215.7 L541.8,213.4 L541.8,285.8 L511,283.5 Z" fill="#3e3e3e"/>
<path d="M553.3,212.2 L592.4,210.6 L592.4,291.1 L553.3,288.1 Z" fill="#3e3e3e"/>
</g>
<g fill="#dcdcdc">
<path d="M426,221.5 L438,220.8 L438,272.8 L430.5,272.6 Z"/>
<path d="M450.7,210.6 L467.2,209.8 L467.2,247.5 L450.7,246.6 Z"/>
<path d="M480.1,207.5 L500.8,206.7 L500.8,248.5 L480.1,247.2 Z"/>
<path d="M450.5,260.5 L467.1,260.3 L467.1,294.5 L450.5,293.8 Z"/>
<path d="M480.5,262.5 L501.6,263.4 L501.6,300 L480.5,298.8 Z"/>
<path d="M516.6,216.4 L541.4,214.2 L541.4,285 L516.6,282.7 Z"/>
<path d="M559.1,213 L592,211.4 L592,290.3 L559.1,287.3 Z"/>
</g>
</svg>

<div id="tabbar" class="a"></div>
<div id="status" class="a"></div>
<div id="task" class="a"></div>
<!-- view tab bar -->
<div class="a" style="left:264px;top:403.5px;width:1px;height:13.5px;background:#d8d7d5"></div>
<div class="a" style="left:265.5px;top:404px;width:78.5px;height:13px;background:#f7f7f7;border:1px solid #dad9d7;border-top:none;border-radius:0 0 2px 2px"></div>
<svg class="a" style="left:266px;top:406px" width="10" height="9" viewBox="0 0 10 9"><path d="M1.5,1 H5.5 V2.5 H3 V4 H5 V5.5 H3 V8 H1.5 Z" fill="#b03030"/><circle cx="6.2" cy="5.6" r="2.2" fill="#4a5fa0"/></svg>
<div class="t" style="left:276.9px;top:407px;color:#707070;font-size:5.5px">olga_schalter_010 : 1</div>
<svg class="a" style="left:333px;top:407px" width="8" height="8" viewBox="0 0 8 8"><rect x="1" y="1" width="6" height="6" rx="1" fill="#d9634f"/><path d="M2.8,2.8 L5.2,5.2 M5.2,2.8 L2.8,5.2" stroke="#fff" stroke-width="0.8"/></svg>
<!-- status bar -->
<div class="a" style="left:0;top:417px;width:796px;height:1px;background:#e4e3e1"></div>
<div class="t" style="left:2px;top:420px;color:#4a4a4a;font-size:5.4px">Preselected: olga_schalter_009.Body.Hole001.Face49 (123.624951 mm, -4.186441 mm, -17.315495 mm)</div>
<div class="a" style="left:696px;top:418px;width:1px;height:11px;background:#dddcda"></div>
<div class="a" style="left:734px;top:418px;width:1px;height:11px;background:#dddcda"></div>
<div class="a" style="left:785.5px;top:418px;width:1px;height:11px;background:#dddcda"></div>
<svg class="a" style="left:706px;top:420px" width="6" height="8" viewBox="0 0 6 8"><rect x="1" y="1" width="3.6" height="5.6" rx="1.8" fill="none" stroke="#444" stroke-width="0.8"/><path d="M2.8,1 V3.5" stroke="#444" stroke-width="0.6"/></svg>
<div class="t" style="left:713px;top:420.3px;color:#555;font-size:5.4px">CAD</div>
<svg class="a" style="left:726px;top:422px" width="5" height="4" viewBox="0 0 5 4"><path d="M0.5,0.8 H4.2 L2.35,3.2 Z" fill="#555"/></svg>
<!-- taskbar -->
<div class="a" style="left:0;top:430.5px;width:8px;height:4.5px;background:#6a9a50"></div>
<div class="a" style="left:17px;top:431.5px;width:3.5px;height:3.5px;background:#6a6a6a;border-radius:2px"></div>
<div class="a" style="left:27px;top:432.5px;width:58px;height:2.5px;background:#4a4a48"></div>
<div class="a" style="left:93px;top:431.5px;width:4px;height:3.5px;background:#9a9a9a"></div>
<div class="a" style="left:104px;top:432.5px;width:22px;height:2.5px;background:#4a4a48"></div>
<div class="a" style="left:171px;top:431.5px;width:6px;height:3.5px;background:#8a8a88"></div>
<div class="a" style="left:200px;top:430.5px;width:120px;height:4.5px;background:#343432"></div>
<div class="a" style="left:246px;top:431.5px;width:4px;height:3.5px;background:#b04030"></div>
<div class="a" style="left:255px;top:432.5px;width:35px;height:2.5px;background:#505050"></div>
<div class="a" style="left:667px;top:430.5px;width:18px;height:4.5px;background:#8fae78"></div>
<div class="a" style="left:685px;top:430.5px;width:11px;height:4.5px;background:#5f7f45"></div>
<div class="a" style="left:672px;top:431.5px;width:7px;height:3.5px;background:#c85a40;border-radius:1px 1px 0 0"></div>
<div class="a" style="left:787px;top:430.5px;width:8px;height:4.5px;background:#888"></div>
<!-- title bar buttons -->
<svg class="a" style="left:765px;top:4px" width="30" height="14" viewBox="765 4 30 14">
<circle cx="773" cy="10.2" r="2.9" fill="#73726d"/><path d="M771.6,10.2 H774.4" stroke="#4a4945" stroke-width="0.6"/>
<circle cx="780.3" cy="10.2" r="2.9" fill="#73726d"/><rect x="779.2" y="9.1" width="2.2" height="2.2" fill="none" stroke="#4a4945" stroke-width="0.5"/>
<circle cx="787.6" cy="10.2" r="2.9" fill="#e05a2f"/><path d="M786.6,9.2 L788.6,11.2 M788.6,9.2 L786.6,11.2" stroke="#5a2010" stroke-width="0.5"/>
</svg>
<svg class="a" style="left:716px;top:6px" width="8" height="10" viewBox="0 0 8 10"><path d="M1,1 L1,8 L2.8,6.4 L4.2,9 L5.2,8.5 L4,6 L6.4,6 Z" fill="#fff" stroke="#222" stroke-width="0.5"/></svg>
<!-- top panel elements -->
<div class="a" style="left:3px;top:0;width:7px;height:3px;border-radius:0 0 4px 4px;background:#8cbf5a"></div>
<div class="a" style="left:0;top:0;width:800px;height:3.5px;overflow:hidden"><div class="t" style="left:15px;top:-4.5px;color:#c8c5be;font-size:6px">Anwendungen</div><div class="t" style="left:53px;top:-4.5px;color:#c8c5be;font-size:6px">Orte</div><div class="t" style="left:69px;top:-4.5px;color:#c8c5be;font-size:6px">System</div><div class="t" style="left:742px;top:-4.5px;color:#c8c5be;font-size:6px">olga.schalter</div></div>
<div class="a" style="left:106px;top:0;width:8px;height:3px;background:linear-gradient(90deg,#5c7fbf,#e8eef8)"></div>
<div class="a" style="left:121px;top:0;width:7px;height:3px;border-radius:0 0 4px 4px;background:#6ca84a"></div>
<div class="a" style="left:138px;top:0;width:4px;height:2px;background:#888"></div>

<div class="a" style="left:788px;top:0;width:6px;height:3px;border-radius:0 0 3px 3px;background:#999"></div>
<!-- nav cube -->
<svg class="a" style="left:715px;top:75px" width="80" height="60" viewBox="715 75 80 60">
<circle cx="755" cy="105.5" r="23" fill="none" stroke="#e3e3e3" stroke-width="2.2" stroke-dasharray="30 6" stroke-dashoffset="-3" opacity="0.55"/><g fill="#e4e4e4"><path d="M752.5,81 L755,78.5 L757.5,81 Z"/><path d="M752.5,130 L755,132.5 L757.5,130 Z"/><path d="M731,103 L728.5,105.5 L731,108 Z"/><path d="M779,103 L781.5,105.5 L779,108 Z"/></g>
<path d="M740,96 Q740,94 742,94.5 L752,96 L752,115 L741.5,114 Q740,114 740,112 Z" fill="#f4f4f4"/>
<path d="M752,96 L754.5,93 L757,96 L757,115 L754.5,117 L752,115 Z" fill="#fafafa"/>
<path d="M757,95.5 L767,94.5 Q769,94.5 769,96.5 L769,111.5 Q769,113.5 767,113.5 L757,114.5 Z" fill="#efefef"/>
<path d="M754.2,101 V114.5" stroke="#8ad88a" stroke-width="1.8"/><path d="M754.2,101 V114.5" stroke="#4cc04c" stroke-width="0.7"/>
<path d="M740,116 L754.5,115.2" stroke="#7a7ad0" stroke-width="0.9"/>
<path d="M754.5,115.2 L765,116.2" stroke="#e09a9a" stroke-width="0.9"/>
<text x="743.8" y="107.6" font-family="Liberation Sans" font-size="5.2" font-weight="bold" fill="#222">ꟻ0</text>
<text x="0" y="0" font-family="Liberation Sans" font-size="5" font-weight="bold" fill="#222" transform="translate(761,100) rotate(90)">ƎꟼO</text>
<text x="737" y="118" font-family="Liberation Sans" font-size="4.5" fill="#4040c0">Z</text>
<text x="771" y="118.5" font-family="Liberation Sans" font-size="4.5" fill="#d04040">X</text>
<path d="M764,125 L768,123 L772,125 L772,129.5 L768,131.5 L764,129.5 Z" fill="#c9c9c9"/>
<path d="M764,125 L768,127 L772,125" fill="none" stroke="#e0e0e0" stroke-width="0.6"/>
<path d="M774,126.2 H777.5 L775.75,128 Z" fill="#888"/>
</svg>
<!-- axis cross -->
<svg class="a" style="left:760px;top:368px" width="35" height="25" viewBox="760 368 35 25">
<path d="M778.8,387 V376" stroke="#58a858" stroke-width="1.1"/>
<path d="M778.8,387 H788.5" stroke="#c05050" stroke-width="1.1"/>
<path d="M778.8,387 H769.5" stroke="#4040a0" stroke-width="1.1"/>
<path d="M786,385.6 L789.5,387 L786,388.4 Z" fill="#a03030"/>
<path d="M772,385.6 L768.5,387 L772,388.4 Z" fill="#202080"/>
<path d="M777.6,379 L778.8,375.5 L780,379 Z" fill="#2a7a2a"/>
<text x="780" y="377" font-family="Liberation Sans" font-size="4" fill="#666">Y</text>
<text x="790" y="389" font-family="Liberation Sans" font-size="4" fill="#666">X</text>
<text x="770" y="385" font-family="Liberation Sans" font-size="3.5" fill="#444">Z</text>
</svg>

</body></html>
